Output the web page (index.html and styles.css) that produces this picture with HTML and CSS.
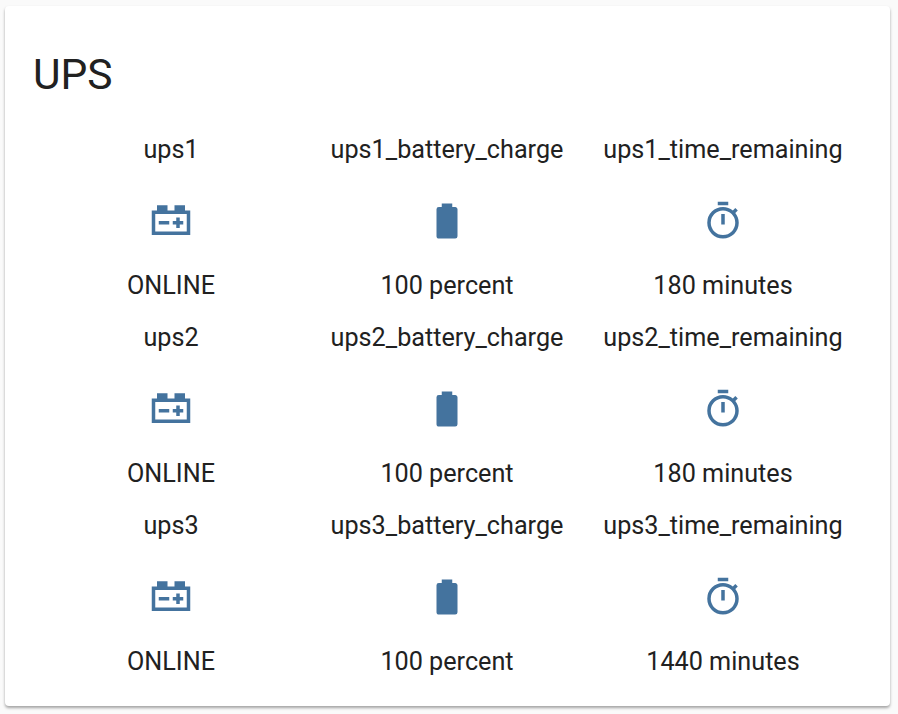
FILE: index.html
```html
<!DOCTYPE html>
<html lang="en">
<head>
    <meta charset="UTF-8">
    <title>UPS</title>
    <link rel="stylesheet" href="styles.css">
</head>
<body>
    <svg class="defs" width="0" height="0">
        <symbol id="car-battery" viewBox="0 0 24 24"><path d="M4,3V6H1V20H23V6H20V3H14V6H10V3H4M3,8H21V18H3V8M15,10V12H13V14H15V16H17V14H19V12H17V10H15M5,12V14H11V12H5Z"/></symbol>
        <symbol id="battery" viewBox="0 0 24 24"><path d="M16.67,4H15V2H9V4H7.33A1.33,1.33 0 0,0 6,5.33V20.67C6,21.4 6.6,22 7.33,22H16.67A1.33,1.33 0 0,0 18,20.67V5.33C18,4.6 17.4,4 16.67,4Z"/></symbol>
        <symbol id="timer" viewBox="0 0 24 24"><path d="M12,20A7,7 0 0,1 5,13A7,7 0 0,1 12,6A7,7 0 0,1 19,13A7,7 0 0,1 12,20M19.03,7.39L20.45,5.97C20,5.46 19.55,5 19.04,4.56L17.62,6C16.07,4.74 14.12,4 12,4A9,9 0 0,0 3,13A9,9 0 0,0 12,22C17,22 21,17.97 21,13C21,10.88 20.26,8.93 19.03,7.39M11,14H13V8H11M15,1H9V3H15V1Z"/></symbol>
    </svg>

    <div class="card">
        <h1 class="card-title">UPS</h1>
        <div class="states">
            <div class="state">
                <div class="state-name">ups1</div>
                <svg class="state-icon"><use href="#car-battery"/></svg>
                <div class="state-value">ONLINE</div>
            </div>
            <div class="state">
                <div class="state-name">ups1_battery_charge</div>
                <svg class="state-icon"><use href="#battery"/></svg>
                <div class="state-value">100 percent</div>
            </div>
            <div class="state">
                <div class="state-name">ups1_time_remaining</div>
                <svg class="state-icon"><use href="#timer"/></svg>
                <div class="state-value">180 minutes</div>
            </div>

            <div class="state">
                <div class="state-name">ups2</div>
                <svg class="state-icon"><use href="#car-battery"/></svg>
                <div class="state-value">ONLINE</div>
            </div>
            <div class="state">
                <div class="state-name">ups2_battery_charge</div>
                <svg class="state-icon"><use href="#battery"/></svg>
                <div class="state-value">100 percent</div>
            </div>
            <div class="state">
                <div class="state-name">ups2_time_remaining</div>
                <svg class="state-icon"><use href="#timer"/></svg>
                <div class="state-value">180 minutes</div>
            </div>

            <div class="state">
                <div class="state-name">ups3</div>
                <svg class="state-icon"><use href="#car-battery"/></svg>
                <div class="state-value">ONLINE</div>
            </div>
            <div class="state">
                <div class="state-name">ups3_battery_charge</div>
                <svg class="state-icon"><use href="#battery"/></svg>
                <div class="state-value">100 percent</div>
            </div>
            <div class="state">
                <div class="state-name">ups3_time_remaining</div>
                <svg class="state-icon"><use href="#timer"/></svg>
                <div class="state-value">1440 minutes</div>
            </div>
        </div>
    </div>
</body>
</html>
```

FILE: styles.css
```css
* {
    box-sizing: border-box;
    margin: 0;
    padding: 0;
}

body {
    background-color: #fafafa;
    color: #212121;
    font-family: Roboto, "Liberation Sans", sans-serif;
    padding: 6px 8px 8px 5px;
}

.defs {
    display: block;
    height: 0;
}

.card {
    background: white;
    border-radius: 4px;
    box-shadow: 0 2px 3px rgba(0,0,0,0.35);
    height: 700px;
    padding: 41px 28px 0;
}

.card-title {
    font-size: 42.5px;
    font-weight: 400;
    line-height: 56px;
    margin-bottom: 33px;
}

.states {
    display: grid;
    grid-template-columns: repeat(3, 276px);
}

.state {
    align-items: center;
    display: flex;
    flex-direction: column;
    height: 188px;
}

.state-name {
    font-size: 25.2px;
    line-height: 28px;
    white-space: nowrap;
}

.state-icon {
    fill: #44739e;
    height: 42px;
    margin: 36px 0 30px;
    width: 42px;
}

.state-value {
    font-size: 25.2px;
    line-height: 28px;
    white-space: nowrap;
}
```
